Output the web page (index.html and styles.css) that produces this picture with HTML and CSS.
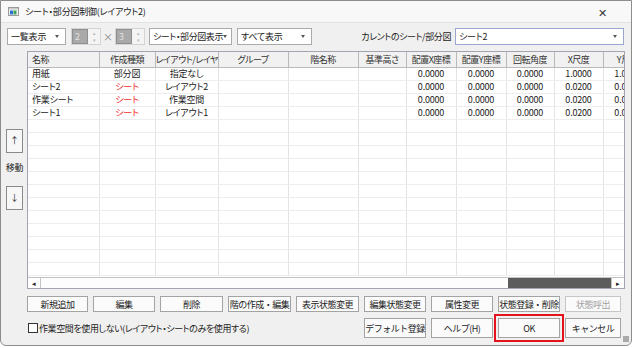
FILE: index.html
```html
<!DOCTYPE html>
<html lang="ja">
<head>
    <meta charset="UTF-8">
    <title>シート・部分図制御(レイアウト2)</title>
    <link rel="stylesheet" href="styles.css">
</head>
<body>
    <div class="window">
        <div class="titlebar">
            <svg class="app-icon" width="11" height="9" viewBox="0 0 11 9">
                <rect x="0.5" y="0.5" width="10" height="8" fill="#f4f4f4" stroke="#9a9a9a"/>
                <rect x="1" y="1" width="9" height="1.5" fill="#c9c9c9"/>
                <rect x="2" y="3.5" width="3" height="4" fill="#2f6fd0"/>
                <rect x="5.5" y="3.5" width="3" height="4" fill="#3ca35a"/>
            </svg>
            <span class="title">シート・部分図制御(レイアウト2)</span>
            <span class="close">✕</span>
        </div>

        <div class="toolbar">
            <div class="combo combo-list"><span>一覧表示</span><i class="arrow"></i></div>
            <div class="spin">
                <span class="spin-val">2</span>
                <span class="spin-btns"><i>▴</i><i>▾</i></span>
            </div>
            <span class="times">×</span>
            <div class="spin">
                <span class="spin-val">3</span>
                <span class="spin-btns"><i>▴</i><i>▾</i></span>
            </div>
            <div class="combo combo-sheet"><span>シート・部分図表示</span><i class="arrow"></i></div>
            <div class="combo combo-all"><span>すべて表示</span><i class="arrow"></i></div>
            <span class="current-label">カレントのシート/部分図</span>
            <div class="combo combo-current"><span>シート2</span><i class="arrow"></i></div>
        </div>

        <div class="main">
            <div class="side">
                <button class="move">↑</button>
                <span class="move-label">移動</span>
                <button class="move">↓</button>
            </div>
            <div class="grid">
                <div class="grid-body">
                    <table>
                        <colgroup>
                            <col style="width:71px"><col style="width:56px"><col style="width:63px">
                            <col style="width:70px"><col style="width:70px"><col style="width:48px">
                            <col style="width:50px"><col style="width:50px"><col style="width:48px">
                            <col style="width:49px"><col style="width:49px">
                        </colgroup>
                        <thead>
                            <tr>
                                <th class="left">名称</th><th>作成種類</th><th>レイアウト/レイヤ</th>
                                <th>グループ</th><th>階名称</th><th>基準高さ</th><th>配置X座標</th>
                                <th>配置Y座標</th><th>回転角度</th><th>X尺度</th><th>Y尺度</th>
                            </tr>
                        </thead>
                        <tbody>
                            <tr>
                                <td class="left">用紙</td><td>部分図</td><td>指定なし</td><td></td><td></td><td></td>
                                <td>0.0000</td><td>0.0000</td><td>0.0000</td><td>1.0000</td><td>1.0000</td>
                            </tr>
                            <tr>
                                <td class="left">シート2</td><td class="red">シート</td><td>レイアウト2</td><td></td><td></td><td></td>
                                <td>0.0000</td><td>0.0000</td><td>0.0000</td><td>0.0200</td><td>0.0200</td>
                            </tr>
                            <tr>
                                <td class="left">作業シート</td><td class="red">シート</td><td>作業空間</td><td></td><td></td><td></td>
                                <td>0.0000</td><td>0.0000</td><td>0.0000</td><td>0.0200</td><td>0.0200</td>
                            </tr>
                            <tr>
                                <td class="left">シート1</td><td class="red">シート</td><td>レイアウト1</td><td></td><td></td><td></td>
                                <td>0.0000</td><td>0.0000</td><td>0.0000</td><td>0.0200</td><td>0.0200</td>
                            </tr>
                            <tr><td></td><td></td><td></td><td></td><td></td><td></td><td></td><td></td><td></td><td></td><td></td></tr>
                            <tr><td></td><td></td><td></td><td></td><td></td><td></td><td></td><td></td><td></td><td></td><td></td></tr>
                            <tr><td></td><td></td><td></td><td></td><td></td><td></td><td></td><td></td><td></td><td></td><td></td></tr>
                            <tr><td></td><td></td><td></td><td></td><td></td><td></td><td></td><td></td><td></td><td></td><td></td></tr>
                            <tr><td></td><td></td><td></td><td></td><td></td><td></td><td></td><td></td><td></td><td></td><td></td></tr>
                            <tr><td></td><td></td><td></td><td></td><td></td><td></td><td></td><td></td><td></td><td></td><td></td></tr>
                            <tr><td></td><td></td><td></td><td></td><td></td><td></td><td></td><td></td><td></td><td></td><td></td></tr>
                            <tr><td></td><td></td><td></td><td></td><td></td><td></td><td></td><td></td><td></td><td></td><td></td></tr>
                            <tr><td></td><td></td><td></td><td></td><td></td><td></td><td></td><td></td><td></td><td></td><td></td></tr>
                            <tr><td></td><td></td><td></td><td></td><td></td><td></td><td></td><td></td><td></td><td></td><td></td></tr>
                            <tr><td></td><td></td><td></td><td></td><td></td><td></td><td></td><td></td><td></td><td></td><td></td></tr>
                            <tr><td></td><td></td><td></td><td></td><td></td><td></td><td></td><td></td><td></td><td></td><td></td></tr>
                        </tbody>
                    </table>
                </div>
                <div class="hscroll">
                    <span class="sb-arrow">◂</span>
                    <span class="sb-track"><i class="sb-thumb"></i></span>
                    <span class="sb-arrow right">▸</span>
                </div>
            </div>
        </div>

        <div class="actions">
            <button>新規追加</button>
            <button>編集</button>
            <button>削除</button>
            <button>階の作成・編集</button>
            <button>表示状態変更</button>
            <button>編集状態変更</button>
            <button>属性変更</button>
            <button>状態登録・削除</button>
            <button class="disabled">状態呼出</button>

            <label class="check"><span class="box"></span>作業空間を使用しない(レイアウト・シートのみを使用する)</label>
            <button class="tall">デフォルト登録</button>
            <button class="tall">ヘルプ(H)</button>
            <button class="tall focused">OK</button>
            <button class="tall">キャンセル</button>
        </div>
        <div class="grip"></div>
    </div>
</body>
</html>
```

FILE: styles.css
```css
body {
    margin: 0;
    background-color: #fff;
    font-family: "Noto Sans CJK JP", "Noto Sans", sans-serif;
    font-size: 9px;
    font-feature-settings: "palt";
    letter-spacing: -0.2px;
    color: #222;
}
.window {
    position: relative;
    width: 632px;
    height: 346px;
    box-sizing: border-box;
    border: 1px solid #8c8c8c;
    border-radius: 0 0 6px 6px;
    background-color: #f0f0f0;
    display: flex;
    flex-direction: column;
    overflow: hidden;
}
.titlebar {
    height: 21px;
    flex: none;
    display: flex;
    align-items: center;
    padding-left: 7px;
    background-color: #f8f8f8;
    border-bottom: 1px solid #e2e2e2;
}
.title {
    margin-left: 6px;
    font-size: 9px;
    color: #1a1a1a;
}
.close {
    margin-left: auto;
    margin-right: 22px;
    width: 14px;
    text-align: center;
    font-size: 11px;
    color: #333;
}

/* toolbar */
.toolbar {
    flex: none;
    display: flex;
    align-items: center;
    height: 17px;
    padding: 5px 7px 0 6px;
}
.combo {
    height: 17px;
    box-sizing: border-box;
    border: 1px solid #aaa;
    background-color: #fff;
    display: flex;
    align-items: center;
    padding-left: 3px;
}
.combo span {
    flex: 1;
    white-space: nowrap;
}
.arrow {
    width: 0;
    height: 0;
    margin-right: 6px;
    border-left: 2px solid transparent;
    border-right: 2px solid transparent;
    border-top: 3px solid #555;
}
.combo-list { width: 59px; }
.combo-sheet { width: 83px; margin-left: 4px; }
.combo-sheet span { letter-spacing: -0.4px; }
.combo-all { width: 75px; margin-left: 5px; }
.combo-current { width: 169px; border-color: #9aa6cf; }
.current-label {
    margin-left: auto;
    margin-right: 4px;
    white-space: nowrap;
    letter-spacing: -0.4px;
}
.spin {
    width: 30px;
    height: 17px;
    box-sizing: border-box;
    margin-left: 5px;
    display: flex;
    border: 1px solid #d4d4d4;
    background-color: #f4f4f4;
}
.spin + .times + .spin { margin-left: 0; }
.spin-val {
    width: 16px;
    box-sizing: border-box;
    background-color: #a9a9a9;
    border: 1px solid #8f8f8f;
    color: #e2e2e2;
    padding-left: 2px;
    line-height: 13px;
}
.spin-btns {
    flex: 1;
    display: flex;
    flex-direction: column;
    align-items: center;
    font-size: 5px;
    line-height: 7px;
    color: #b8b8b8;
}
.spin-btns i { font-style: normal; }
.times {
    width: 14px;
    text-align: center;
    color: #888;
    font-size: 10px;
}

/* grid area */
.main {
    flex: none;
    height: 238px;
    margin-top: 6px;
    display: flex;
    padding: 0 6px 0 5px;
}
.side {
    width: 17px;
    margin-right: 4px;
    display: flex;
    flex-direction: column;
    align-items: center;
    justify-content: center;
    padding-bottom: 2px;
}
.move {
    width: 17px;
    height: 24px;
    padding: 0;
    border: 1px solid #8a8a8a;
    background-color: #f7f7f7;
    font-family: inherit;
    font-size: 9px;
    color: #333;
}
.move-label {
    margin: 8px 0 12px;
    white-space: nowrap;
}
.grid {
    flex: 1;
    border: 1px solid #a4a4b0;
    background-color: #fff;
    display: flex;
    flex-direction: column;
    overflow: hidden;
}
.grid-body {
    flex: 1;
    overflow: hidden;
}
table {
    border-collapse: collapse;
    table-layout: fixed;
    width: 624px;
}
th {
    height: 15px;
    padding: 0;
    background-color: #f1f1f1;
    border-right: 1px solid #b9b9b9;
    border-bottom: 1px solid #b9b9b9;
    font-weight: normal;
    color: #333;
    white-space: nowrap;
    overflow: hidden;
    letter-spacing: -0.5px;
}
td {
    height: 12px;
    padding: 0;
    border-right: 1px solid #e3e3e3;
    border-bottom: 1px solid #ededed;
    text-align: center;
    white-space: nowrap;
    overflow: hidden;
    line-height: 12px;
}
th.left, td.left {
    text-align: left;
    padding-left: 4px;
}
.red { color: #f42a2a; }
.hscroll {
    flex: none;
    height: 10px;
    display: flex;
    border-top: 1px solid #c4c4c4;
}
.sb-arrow {
    width: 12px;
    border-right: 1px solid #c4c4c4;
    font-size: 7px;
    line-height: 10px;
    text-align: center;
    color: #222;
}
.sb-arrow.right {
    border-right: none;
    border-left: 1px solid #c4c4c4;
}
.sb-track {
    flex: 1;
    display: flex;
    justify-content: flex-end;
    background-color: #fdfdfd;
}
.sb-thumb {
    width: 103px;
    background-color: #5c5c5c;
}

/* buttons */
.actions {
    flex: none;
    display: grid;
    grid-template-columns: 61px 62px 63px 63px 63px 62px 62px 62px 56px;
    grid-template-rows: 16px 20px;
    column-gap: 5px;
    row-gap: 6px;
    padding: 7px 0 0 26px;
}
.actions button {
    padding: 0;
    border: 1px solid #a3a3a3;
    background-color: #fbfbfb;
    font-family: inherit;
    font-size: 9px;
    letter-spacing: -0.5px;
    color: #222;
    white-space: nowrap;
    overflow: hidden;
}
.actions button.disabled {
    color: #a2a2a2;
    border-color: #c6c6c6;
}
.actions button.focused {
    outline: 2px solid #e5131d;
    outline-offset: 2px;
    overflow: visible;
}
.check {
    grid-column: 1 / 6;
    display: flex;
    align-items: center;
    white-space: nowrap;
    padding-left: 1px;
    letter-spacing: -0.4px;
}
.box {
    width: 8px;
    height: 8px;
    border: 1px solid #333;
    background-color: #fff;
    margin-right: 1px;
}
.grip {
    position: absolute;
    right: 2px;
    bottom: 3px;
    width: 6px;
    height: 6px;
    background-image: radial-gradient(circle, #a8a8a8 0.7px, transparent 1px);
    background-size: 2px 2px;
}
```
